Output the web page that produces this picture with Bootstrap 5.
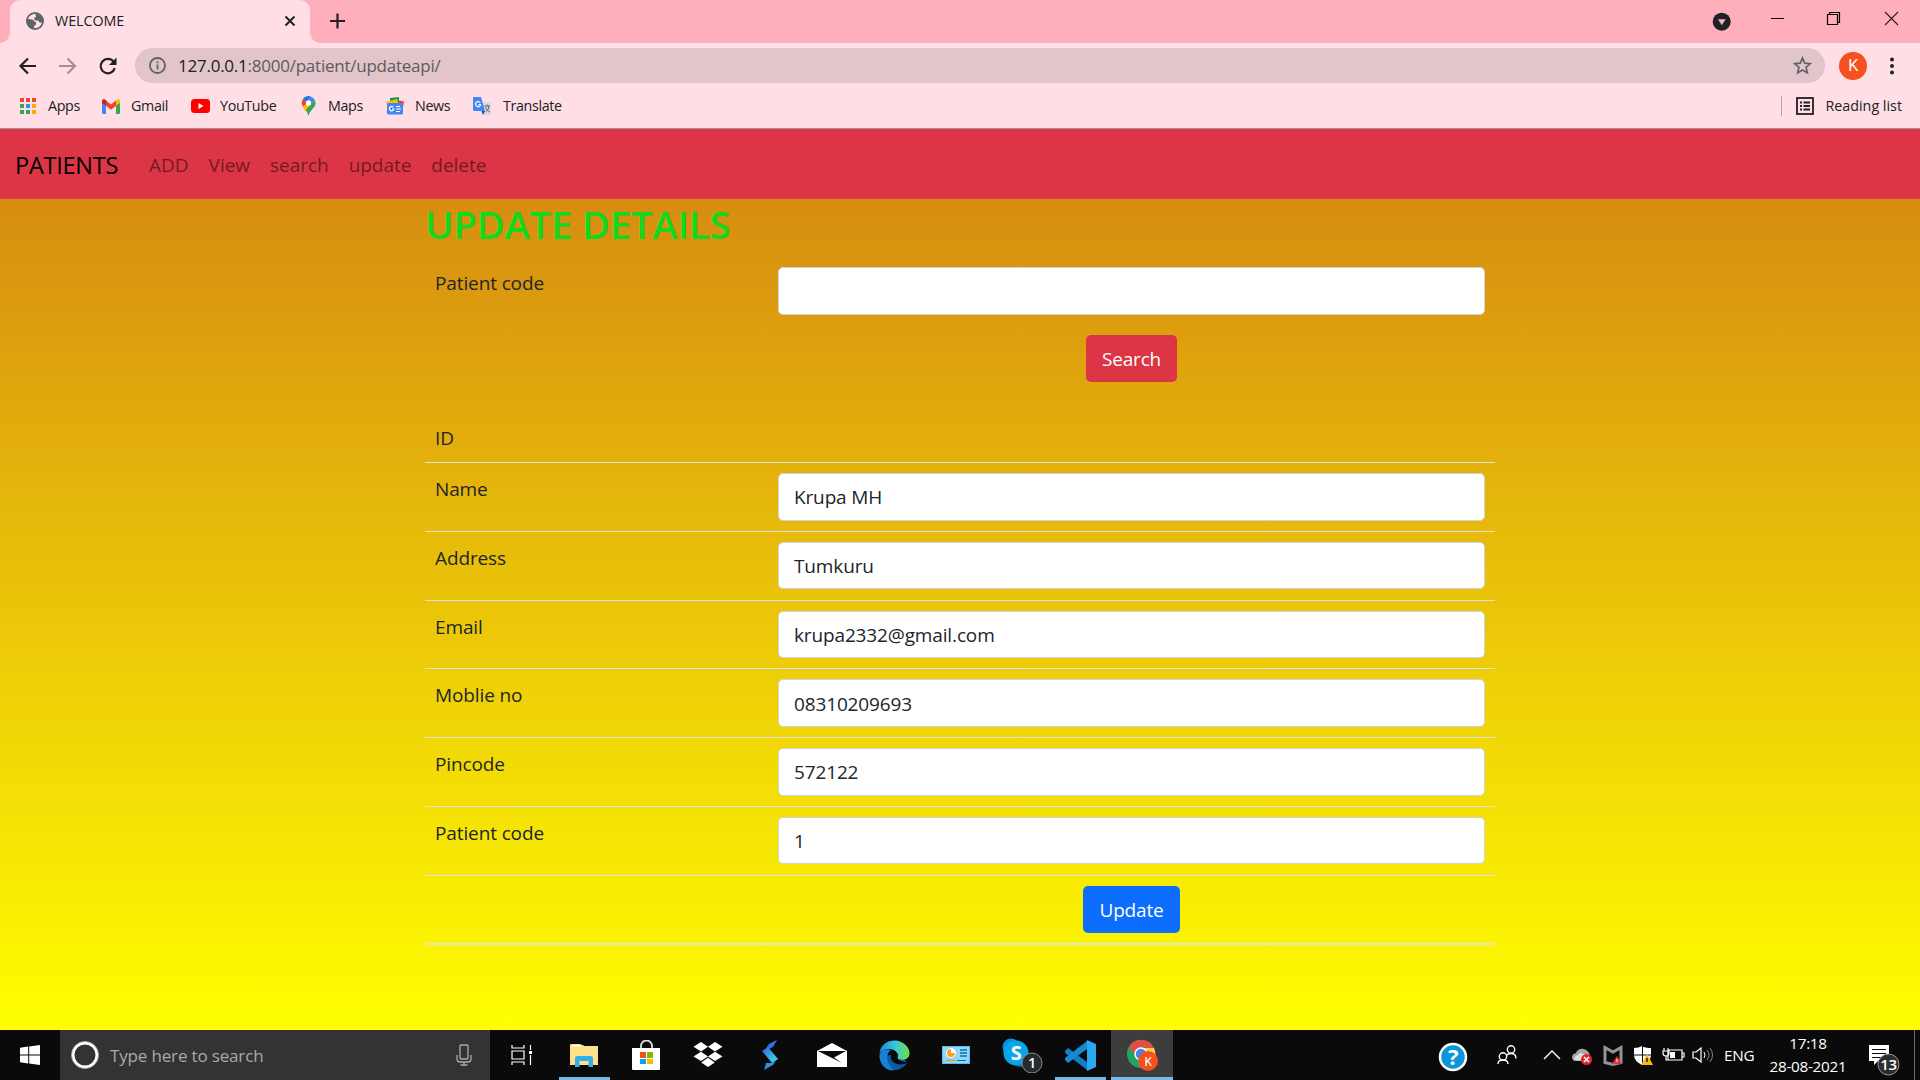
<!DOCTYPE html>
<html lang="en">
<head>
<meta charset="utf-8">
<title>WELCOME</title>
<link href="https://cdn.jsdelivr.net/npm/bootstrap@5.3.0/dist/css/bootstrap.min.css" rel="stylesheet">
<script src="https://cdn.jsdelivr.net/npm/bootstrap@5.3.0/dist/js/bootstrap.bundle.min.js"></script>
<style>
html{font-size:20px}
body{width:1920px;height:1080px;overflow:hidden;font-family:"Open Sans","Noto Sans",sans-serif;font-size:19px;line-height:30px;letter-spacing:-.12px;color:#212529}
svg{display:block;flex:none}
.chrome-ui{font-size:14.3px;line-height:20px;letter-spacing:-.35px;background:#ffdfe5;color:#202124;height:129px;border-bottom:1px solid #a58f95}
.tabstrip{height:43px;background:#ffaebc}
.tabbox{width:300px;margin-left:10px;background:#ffdfe5;border-radius:10px 10px 0 0;padding:0 14px 2px 16px;position:relative}
.tabbox:before,.tabbox:after{content:"";position:absolute;bottom:0;width:10px;height:10px}
.tabbox:before{left:-10px;background:radial-gradient(circle at 0 0,transparent 9.5px,#ffdfe5 10px)}
.tabbox:after{right:-10px;background:radial-gradient(circle at 100% 0,transparent 9.5px,#ffdfe5 10px)}
.tabname{margin-left:11px;letter-spacing:-.05px}
.newtab{margin:13px 0 0 20px}
.toolrow{height:45px;padding-left:18px}
.omni{width:1690px;height:35px;background:#e1c5ca;border-radius:18px;padding:0 13px 0 14px;font-size:17px;letter-spacing:-.24px;color:#5f5a5d;margin-left:17px}
.omni b{font-weight:400;color:#202124}
.url{margin-left:12px}
.avatar-k{width:28px;height:28px;border-radius:50%;background:#f4511e;color:#fff;font:400 16px/28px Roboto,sans-serif;text-align:center;margin:0 22px 0 14px}
.marks{height:36px;padding:0 18px}
.bar-sep{width:1px;height:20px;background:#b8a0a6}
.readlist{letter-spacing:0}
.page{height:901px;background:linear-gradient(#d38312,#ff0)}
.mainnav{height:70px;background:#dc3545}
.mainnav .container-fluid{padding:2px 15px 0}
.mainnav .navbar-brand{font-size:23.5px;letter-spacing:-.25px;color:#000;padding:0;margin-right:21px}
.mainnav .nav-link{color:rgba(0,0,0,.5);padding:10px;letter-spacing:-.03px}
.content-col{width:1070px;margin:0 auto}
.page-title{font-size:38.5px;line-height:48px;font-weight:600;color:#14d81e;padding-top:1px;margin-bottom:9px;letter-spacing:-.33px}
.page .table{--bs-table-bg:transparent;--bs-table-color:#212529;--bs-table-border-color:#dee2e6;table-layout:fixed;margin-bottom:20px}
.page .table td{padding:10px}
.page .table td:first-child{width:343px;padding-top:11px;padding-bottom:9px}
.lookup tr{height:67.5px}
.details tr{height:68.75px}
.details tr:first-child{height:50.4px}
.details tr:first-child td{padding-bottom:8px}
.details tr:last-child td{border-bottom-width:2px}
.page .form-control{height:47.5px;font-size:19px;letter-spacing:-.14px;border:1px solid #ced4da;border-radius:5px;padding:8px 15px 7px;background:#fff;color:#212529}
.page .btn{height:47.5px;font-size:19px;letter-spacing:-.2px;line-height:30px;padding:8px 15px;border-radius:5px;border:1px solid transparent}
.page .btn-primary{padding:8px 16px}
.taskbar{height:50px;background:#0a0a0a;color:#fff;font-size:15.3px;letter-spacing:-.3px;line-height:23px}
.start{width:60px}
.searchbox{width:430px;background:#333;color:#a9a9a9;font-size:17px;letter-spacing:-.16px;padding:0 18px 0 10px}
.hint{margin-left:10px}
.task{width:62px;display:flex;align-items:center;justify-content:center;border-bottom:3px solid transparent;padding-top:3px}
.task.views{width:63px}
.task.open{background:linear-gradient(#76b9ed,#76b9ed) bottom/51px 3px no-repeat border-box}
.task.current{background:#3d3d3d;border-color:#76b9ed}
.clock{width:92px;text-align:center}
.lang{width:38px}
</style>
</head>
<body class="d-flex flex-column">
<header class="chrome-ui">
  <div class="tabstrip d-flex">
    <div class="tabbox d-flex align-items-center">
      <svg width="18" height="18" viewBox="0 0 18 18"><circle cx="9" cy="9" r="9" fill="#5f6368"/><path d="M9.500 2C6 1.500 3 4 2 7l4 .5q2 0 2 2l2 .5v2.500L8 14v2c4 .5 7-2 8-5.500h-2.500l-1-2H9L8 6l2-1z" fill="#ffdfe5"/><path d="M12 3c0 2-1 3-3 3 0 2 3 1 4 3s2 1 4 1C17 6 15 3 12 3z" fill="#5f6368"/></svg>
      <span class="tabname">WELCOME</span>
      <svg class="ms-auto" width="12" height="12" viewBox="0 0 12 12" stroke="#202124" stroke-width="2"><path d="M1.500 1.500l9 9m0-9l-9 9"/></svg>
    </div>
    <svg class="newtab" width="15" height="16" viewBox="0 0 15 16" stroke="#202124" stroke-width="2.200"><path d="M7.500 .5v15M0 8h15"/></svg>
    <div class="d-flex ms-auto">
      <svg width="209" height="43" viewBox="0 0 209 43" fill="none"><circle cx="10.700" cy="21.700" r="9" fill="#202124"/><path d="M7 19.200h7.600l-3.800 6z" fill="#ffaebc"/><path d="M60 18.500h13" stroke="#000"/><path d="M116.500 14.500h10v10h-10zM118.500 14.500v-2h10v10h-2" stroke="#000" stroke-width="1.200"/><path d="M174 12l13 13m0-13l-13 13" stroke="#222" stroke-width="1.100"/></svg>
    </div>
  </div>
  <div class="toolrow d-flex align-items-center">
    <svg width="100" height="20" viewBox="0 0 100 20" fill="none" stroke="#202124" stroke-width="2.200"><path d="M18 10H3M10 2.500L2.500 10l7.500 7.500"/><path stroke="#a98f95" d="M41 10h16M49.500 2.500L57 10l-7.500 7.500"/><path d="M95.500 5.500a7.200 7.200 0 1 0 1.300 6.700"/><path d="M98.500 1.500v7.500h-7.500z" fill="#202124" stroke="none"/></svg>
    <div class="omni d-flex align-items-center">
      <svg width="17" height="17" viewBox="0 0 17 17" fill="none" stroke="#5f6368" stroke-width="1.800"><circle cx="8.500" cy="8.500" r="7.500"/><path d="M8.500 7.500v5M8.500 4.300v2"/></svg>
      <span class="url"><b>127.0.0.1</b>:8000/patient/updateapi/</span>
      <svg class="ms-auto" width="19" height="19" viewBox="0 0 20 20" fill="none" stroke="#5f6368" stroke-width="1.700"><path d="M10 2l2.300 5.500 6 .5-4.600 3.900 1.400 5.900L10 14.700l-5.100 3.100 1.400-5.900L1.700 8l6-.5z"/></svg>
    </div>
    <div class="avatar-k">K</div>
    <svg width="6" height="18" viewBox="0 0 6 18" fill="#202124"><circle cx="3" cy="2.500" r="2"/><circle cx="3" cy="9" r="2"/><circle cx="3" cy="15.500" r="2"/></svg>
  </div>
  <div class="marks d-flex align-items-center">
    <div class="d-flex align-items-center" style="width:84px"><svg class="me-2" width="20" height="18" viewBox="0 0 20 18"><path fill="#f44336" d="M2 1h4v4H2zM8 1h4v4H8zM14 1h4v4h-4zM2 7h4v4H2z"/><path fill="#34a853" d="M2 7h4v4H2zM2 13h4v4H2zM8 13h4v4H8z"/><path fill="#2196f3" d="M8 7h4v4H8z"/><path fill="#fbab04" d="M14 7h4v4h-4zM14 13h4v4h-4z"/></svg><span>Apps</span></div>
    <div class="d-flex align-items-center" style="width:88px"><svg style="margin-right:11px" width="18" height="15" viewBox="0 0 18 15"><path fill="#4285f4" d="M0 3h4v12H1.500Q0 15 0 13.500z"/><path fill="#34a853" d="M14 3h4v10.500q0 1.500-1.500 1.500H14z"/><path fill="#c5221f" d="M0 2.500C0 0 2 0 3 .6l1.500 1.200v5L0 4z"/><path fill="#fbbc04" d="M18 2.500C18 0 16 0 15 .6l-1.500 1.200v5L18 4z"/><path fill="#ea4335" d="M4 1.400l5 4 5-4v5.300l-5 4-5-4z"/></svg><span>Gmail</span></div>
    <div class="d-flex align-items-center" style="width:111px"><svg style="margin:0 10px 0 1px" width="19" height="14" viewBox="0 0 19 14"><rect width="19" height="14" rx="3.500" fill="#f00"/><path d="M7.500 4l5 3-5 3z" fill="#fff"/></svg><span>YouTube</span></div>
    <div class="d-flex align-items-center" style="width:85px"><svg style="margin-right:12px" width="15" height="20" viewBox="0 0 15 20"><path fill="#34a853" d="M.8 7C.8 12 6 13 7.500 20 9 13 14.500 12 14.500 7z"/><path fill="#fbbc04" d="M1.200 9l6-6 3 6-6 6C3 13 1.500 11 1.200 9z"/><path fill="#ea4335" d="M2 3l5 4-5 3C.2 7.500.5 5 2 3z"/><path fill="#1a73e8" d="M2 3C4 0 8-.5 10 .7L5.500 6z"/><path fill="#4285f4" d="M10 .7c2 .8 3.500 2.300 4 4L9 9 5.500 6z"/><path fill="#34a853" d="M14 4.700Q15.500 8 12 12L9 16 5 14l5-6z"/><circle cx="7.500" cy="7" r="2.700" fill="#fff"/></svg><span>Maps</span></div>
    <div class="d-flex align-items-center" style="width:87px"><svg style="margin-right:11px" width="18" height="18" viewBox="0 0 18 18"><path fill="#0c9d58" d="M4 1l9-1v7H4z"/><path fill="#ea4335" d="M13 3.500l5 1-1.500 8H12z"/><path fill="#fbbc04" d="M0 5l11-3 2 6H1z"/><rect x="1" y="6" width="16" height="11.500" rx="1.500" fill="#4285f4"/><path d="M7.300 10.200a2.200 2.200 0 1 0 .5 1.800H6M10 9.500h4M10 12h5M10 14.500h4" fill="none" stroke="#fff" stroke-width="1.200"/></svg><span>News</span></div>
    <div class="d-flex align-items-center"><svg style="margin-right:12px" width="18" height="19" viewBox="0 0 18 19"><path fill="#dadce0" d="M8 5h8.500q1.500 0 1.500 1.500V18H10z"/><path fill="#4285f4" d="M1 0h7l4 14H1.500Q0 14 0 12.500V1Q0 0 1 0z"/><path fill="#174ea6" d="M8.500 14H12l-2 4z"/><path d="M7.300 5.700a2.600 2.600 0 1 0 .4 2H5.300" fill="none" stroke="#fff" stroke-width="1.200"/><path d="M11.500 9H17M14 7.500V9M16 9c0 3-2 5-3.500 6M12.500 10c1 2.500 2.500 4 4.500 5" fill="none" stroke="#5f6368"/></svg><span>Translate</span></div>
    <div class="bar-sep ms-auto"></div>
    <svg style="margin:0 11px 0 14px" width="18" height="18" viewBox="0 0 18 18" fill="none" stroke="#202124" stroke-width="1.800"><rect x="1" y="1" width="16" height="16"/><path d="M4 5.500h2M7.500 5.500H14M4 9h2M7.500 9H14M4 12.500h2M7.500 12.500H14"/></svg>
    <span class="readlist">Reading list</span>
  </div>
</header>
<main class="page">
  <nav class="navbar navbar-expand mainnav p-0">
    <div class="container-fluid justify-content-start">
      <a class="navbar-brand" href="#">PATIENTS</a>
      <div class="navbar-nav"><a class="nav-link" href="#">ADD</a><a class="nav-link" href="#">View</a><a class="nav-link" href="#">search</a><a class="nav-link" href="#">update</a><a class="nav-link" href="#">delete</a></div>
    </div>
  </nav>
  <div class="content-col">
    <h2 class="page-title">UPDATE DETAILS</h2>
    <table class="table table-borderless lookup">
      <tr><td>Patient code</td><td><input class="form-control" type="text"></td></tr>
      <tr><td></td><td class="text-center"><button class="btn btn-danger">Search</button></td></tr>
    </table>
    <table class="table details">
      <tr><td>ID</td><td></td></tr>
      <tr><td>Name</td><td><input class="form-control" value="Krupa MH"></td></tr>
      <tr><td>Address</td><td><input class="form-control" value="Tumkuru"></td></tr>
      <tr><td>Email</td><td><input class="form-control" value="krupa2332@gmail.com"></td></tr>
      <tr><td>Moblie no</td><td><input class="form-control" value="08310209693"></td></tr>
      <tr><td>Pincode</td><td><input class="form-control" value="572122"></td></tr>
      <tr><td>Patient code</td><td><input class="form-control" value="1"></td></tr>
      <tr><td></td><td class="text-center"><button class="btn btn-primary">Update</button></td></tr>
    </table>
  </div>
</main>
<footer class="taskbar d-flex">
  <div class="start d-flex align-items-center justify-content-center"><svg width="20" height="20" viewBox="0 0 20 20" fill="#fff"><path d="M0 2.800l8.200-1.200v7.900H0zM9.200 1.400L20 0v9.500H9.200zM0 10.500h8.200v7.900L0 17.200zM9.200 10.500H20V20L9.200 18.500z"/></svg></div>
  <div class="searchbox d-flex align-items-center">
    <svg width="30" height="30" viewBox="0 0 30 30" fill="none"><circle cx="15" cy="15" r="12" stroke="#fff" stroke-width="3"/><circle cx="15" cy="15" r="13.500" stroke="#aaa" stroke-width=".8"/></svg>
    <span class="hint">Type here to search</span>
    <svg class="ms-auto" width="16" height="22" viewBox="0 0 16 22" fill="none" stroke="#aaa" stroke-width="1.300"><rect x="4" y="1" width="8" height="14" rx="1"/><path d="M1 11v4q0 3 3 3h8q3 0 3-3v-4M8 18v3M4.500 21h7"/></svg>
  </div>
  <div class="task views"><svg width="22" height="20" viewBox="0 0 22 20" fill="none" stroke="#fff" stroke-width="1.200"><path d="M1 0v3h12V0M1 20v-3h12v3M1 6h12v8H1zM19.500 0v5M19.500 10v10"/><path d="M18 6h3v3h-3z" fill="#fff" stroke="none"/></svg></div>
  <div class="task open"><svg width="28" height="24" viewBox="0 0 28 24"><path d="M0 1h11l2 2H0z" fill="#f5b91e"/><path d="M0 2h13l1 1h14v19H0z" fill="#ffe08c"/><path d="M2 1.500h8v2H2z" fill="#fff"/><path d="M5 24V15q0-2 2-2h14q2 0 2 2v9h-4.500v-6h-9v6z" fill="#35b0e6"/></svg></div>
  <div class="task"><svg width="30" height="30" viewBox="0 0 30 30"><path d="M10 9V6a5 5 0 0 1 11 0v3" fill="none" stroke="#ddd" stroke-width="1.800"/><path d="M1 8h28v21q0 1-1 1H2q-1 0-1-1z" fill="#fff"/><path d="M9 12h6v6H9z" fill="#f25022"/><path d="M16 12h6v6h-6z" fill="#7fba00"/><path d="M9 19h6v5H9z" fill="#00a4ef"/><path d="M16 19h6v5h-6z" fill="#ffb900"/></svg></div>
  <div class="task"><svg width="30" height="26" viewBox="0 0 30 26" fill="#fff"><path d="M8 0l7 4.700-7 4.700L.5 4.700zM22 0l7.500 4.700L22 9.400l-7-4.700zM8 9.700l7 4.700-7 4.700-7.500-4.700zM22 9.700l7.500 4.700L22 19.100l-7-4.700zM15 15.800l6.800 4.700L15 25l-6.800-4.500z"/></svg></div>
  <div class="task"><svg width="16" height="30" viewBox="0 0 16 30"><defs><linearGradient id="sg" x2="1" y2="1"><stop stop-color="#2b62dd"/><stop offset="1" stop-color="#42e5ea"/></linearGradient></defs><path d="M15 0C8 3 4 5 4.500 10L11 7z" fill="#2f74d8"/><path d="M0 11l6-4 10 12-6 4z" fill="url(#sg)"/><path d="M14 21l-3 4-9 5 2-7 6 0z" fill="#2f8fd8"/></svg></div>
  <div class="task"><svg width="30" height="24" viewBox="0 0 30 24"><path d="M0 8L15 0l15 8v16H0z" fill="#fff"/><path d="M1 8h28l-12 6.500 8 5.500L1 8z" fill="#0a0a0a"/></svg></div>
  <div class="task"><svg width="31" height="31" viewBox="0 0 31 31"><defs><linearGradient id="eg"><stop stop-color="#1689df"/><stop offset=".5" stop-color="#35c5df"/><stop offset="1" stop-color="#70e043"/></linearGradient></defs><path d="M.5 15.500a15 15 0 0 0 28 7L20 15z" fill="#0c59a4"/><path d="M.5 14C1 5 8 .5 15.500.5 24 .5 31 7 30.500 14c-.5 5-6 7-11 5-2-1 0-2-.5-4C18 11 14 9 10 9 5 9 2 11 .5 14z" fill="url(#eg)"/><path d="M.5 15C2 10 7 8 12 10c-7 5-3 15 3 20.500C7 31 0 24 .5 15z" fill="#1683d8"/><path d="M13 13c-5 8 6 15 16 9.500-1-1-4 0-8-2-3-1.500-3-3-2-4.500 0-3-4-5-6-3z" fill="#0a0a0a"/></svg></div>
  <div class="task"><svg width="28" height="18" viewBox="0 0 28 18"><rect width="28" height="18" fill="#57baf0"/><rect x="1" y="1" width="26" height="16" fill="#91d8fa"/><circle cx="9" cy="7" r="5" fill="#fff"/><path d="M9 3v4h4a4 4 0 1 1-4-4z" fill="#f7a520"/><path d="M18 4h7M18 7h7M18 10h7" stroke="#1668a8" stroke-width="1.500"/><path d="M4 14.500h10" stroke="#e89a22" stroke-width="1.300"/><path d="M15 14.500h9" stroke="#1668a8"/></svg></div>
  <div class="task"><svg style="margin-left:8px" width="42" height="36" viewBox="0 0 42 36"><circle cx="10" cy="10" r="8.500" fill="#0b8fdd"/><circle cx="20" cy="22" r="8" fill="#086fc0"/><circle cx="15" cy="16" r="12.500" fill="#09a5ea"/><text x="15" y="23" text-anchor="middle" font-family="Open Sans" font-weight="700" font-size="20" fill="#fff">S</text><circle cx="31" cy="26" r="10" fill="#252a2d" stroke="#888"/><text x="31" y="31" text-anchor="middle" font-family="Open Sans" font-size="14.500" font-weight="600" fill="#fff">1</text></svg></div>
  <div class="task open"><svg width="31" height="31" viewBox="0 0 31 31"><path d="M0 11l3-3 19 14v8L0 13z" fill="#117dc4"/><path d="M0 20l3 3L22 9V1L0 18z" fill="#168bd4"/><path d="M22 0l9 4v23l-9 4z" fill="#2aa9f2"/></svg></div>
  <div class="task current"><svg width="32" height="32" viewBox="0 0 32 32"><circle cx="15" cy="15" r="14" fill="#1fa463"/><path d="M3 8A14 14 0 0 1 28 9H15q-5 0-6 7z" fill="#dd5144"/><path d="M15 9h13a14 14 0 0 1-11 20l5-12z" fill="#ffce44"/><circle cx="15" cy="15" r="6" fill="#4285f4" stroke="#fff" stroke-width="1.500"/><circle cx="22" cy="22" r="10" fill="#f4511e"/><text x="22" y="26.500" text-anchor="middle" font-family="Roboto" font-size="12" fill="#fff">K</text></svg></div>
  <div class="d-flex ms-auto align-items-center">
    <svg width="286" height="50" viewBox="0 0 286 50" fill="none"><circle cx="15" cy="27" r="13" fill="#0b95da" stroke="#fff" stroke-width="2.500"/><text x="15" y="35" text-anchor="middle" font-family="Open Sans" font-weight="700" font-size="22" fill="#fff">?</text>
    <g stroke="#fff" stroke-width="1.400"><circle cx="73" cy="19.500" r="3.700"/><path d="M67 30.500q0-7 6-7 5 0 5 5"/><circle cx="65" cy="26.500" r="3.700" fill="#0a0a0a"/><path d="M60 34q0-4 5-4t5 4"/><path d="M106 29l8-8 8 8"/></g>
    <path d="M138 31q-4 0-4-4 0-3 4-4 2-5 8-4 6 2 6 8v4z" fill="#a5a5a5"/><path d="M136 30q0-4 4-5 3-4 7 0l4 6z" fill="#ddd"/><circle cx="148.500" cy="29.500" r="5.500" fill="#e4252c"/><path d="M146 27l5 5m0-5l-5 5" stroke="#fff" stroke-width="1.500"/>
    <path d="M167 17.500l8 4.500 8-4.500v15l-8 2-8-2z" stroke="#92949a" stroke-width="3"/><path d="M179 26l5 8h-10z" fill="#e6343a"/><path d="M179 29v3" stroke="#fff"/>
    <path d="M196 18q5 0 8-2 3 2 9 2v7q0 6-9 10-8-4-8-10z" fill="#fff"/><path d="M204.500 16v18M196 25h17" stroke="#0a0a0a"/><path d="M209 24l6 11h-12z" fill="#fdb913"/><path d="M209 28v4" stroke="#222" stroke-width="1.500"/>
    <g stroke="#fff" stroke-width="1.200"><path d="M230 20h14v10h-14zM244 23h2v4h-2M226 18v3M230 18v3M225 21h6v2q0 3-3 3t-3-3zM228 26v4h2"/></g><path d="M232 22h5v6h-5z" fill="#fff"/>
    <path d="M255 22h3l5-4v14l-5-4h-3z" stroke="#fff" stroke-width="1.200"/><path d="M266 22q2 3 0 6" stroke="#fff"/><path d="M269 20q4 5 0 10M272 18q5 7 0 14" stroke="#888"/></svg>
    <span class="lang">ENG</span>
    <div class="clock"><div>17:18</div><div>28-08-2021</div></div>
    <svg width="66" height="50" viewBox="0 0 66 50"><path d="M15 15h20v16H24l-4 4v-4h-5z" fill="#fff"/><path d="M18 19.500h14M18 23.500h14M18 27.500h9" stroke="#0a0a0a" stroke-width="1.200"/><circle cx="34.500" cy="34.500" r="10.500" fill="#2d2d2d" stroke="#999"/><text x="34.500" y="40" text-anchor="middle" font-family="Open Sans" font-size="15" font-weight="600" fill="#fff">13</text><path d="M60.500 0v50" stroke="#666"/></svg>
  </div>
</footer>
</body>
</html>
